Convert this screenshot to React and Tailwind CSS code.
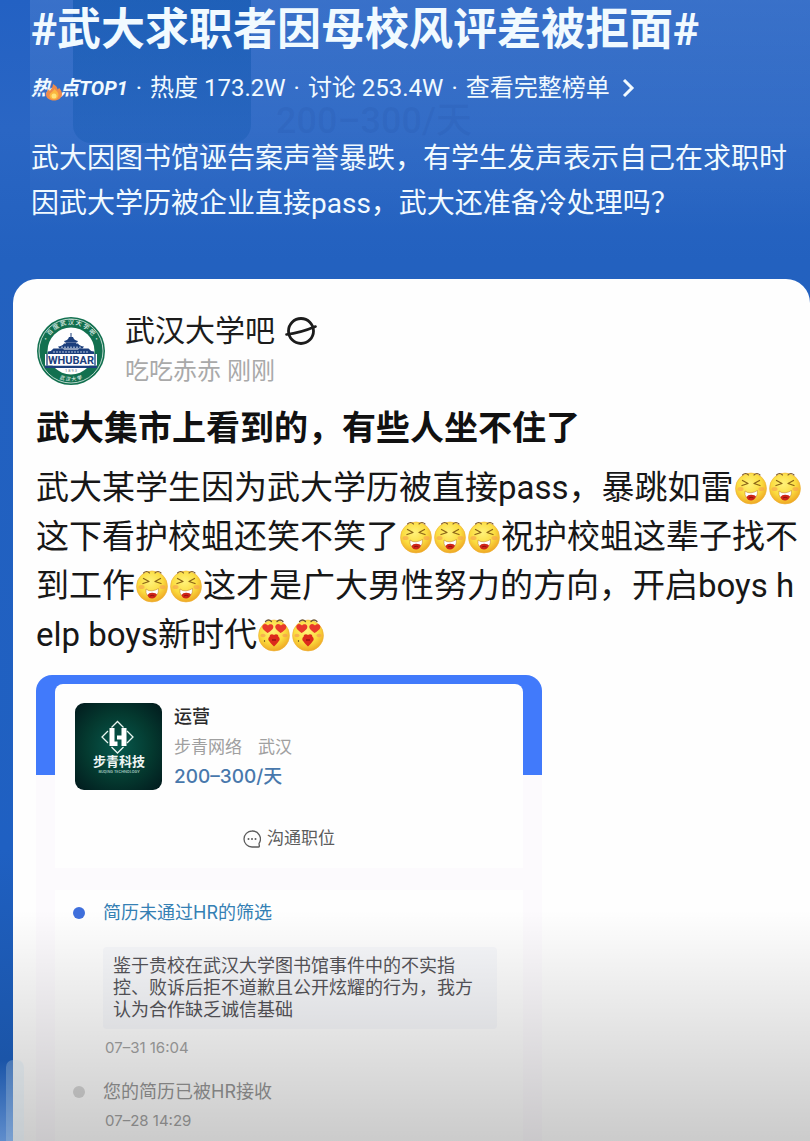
import React from 'react';

const REASON_LINES = [
    '鉴于贵校在武汉大学图书馆事件中的不实指',
    '控、败诉后拒不道歉且公开炫耀的行为，我方',
    '认为合作缺乏诚信基础'
];

const SharedDefs = () => (
    <svg className="absolute h-0 w-0" aria-hidden="true">
        <defs>
            <radialGradient id="face" cx="0.45" cy="0.35" r="0.65">
                <stop offset="0" stopColor="#fff27a" />
                <stop offset="0.6" stopColor="#fbdc3f" />
                <stop offset="1" stopColor="#efa824" />
            </radialGradient>
            <radialGradient id="logoBg" cx="0.5" cy="0.5" r="0.7">
                <stop offset="0" stopColor="#07594d" />
                <stop offset="0.55" stopColor="#04392f" />
                <stop offset="1" stopColor="#021a1d" />
            </radialGradient>
            <path id="ringTop" d="M10.5 41A25.5 25.5 0 1 1 59.5 41" />
            <path id="ringBottom" d="M7.3 46.5A30 30 0 0 0 62.7 46.5" />
        </defs>
    </svg>
);

const LaughFace = () => (
    <svg viewBox="0 0 34 34" className="inline-block h-[34px] w-[34px] shrink-0" role="img" aria-label="大笑">
        <circle cx="17" cy="17.5" r="15.5" fill="url(#face)" stroke="#eeb13a" strokeWidth="0.6" />
        <path d="M8.5 4q3-3 6 0M20 4q3-3 6 0" fill="none" stroke="#7c5a2c" strokeWidth="1.1" strokeLinecap="round" />
        <path d="M8.5 9.5l5.500 3-6 2M25.500 9.500l-5.500 3 6 2" fill="none" stroke="#8a6416" strokeWidth="1.3" strokeLinecap="round" strokeLinejoin="round" />
        <ellipse cx="6.5" cy="18" rx="3" ry="2" fill="#f59a52" opacity="0.55" />
        <ellipse cx="27.5" cy="18" rx="3" ry="2" fill="#f59a52" opacity="0.55" />
        <path d="M11 20q2.500 2.200 6 1.800t6.500-2.300q.5 8.500-6.500 8.500t-6-8z" fill="#fff" stroke="#c88b2f" strokeWidth="0.6" />
        <path d="M12.5 26q1.500-2.500 5-2.300t4.500 1.800q-1.500 4-5 4t-4.500-3.500z" fill="#cf2418" />
        <path d="M15 27q2-1.500 4.500 0" stroke="#8e120f" strokeWidth="1" fill="none" />
    </svg>
);

const LoveFace = () => (
    <svg viewBox="0 0 34 34" className="inline-block h-[34px] w-[34px] shrink-0" role="img" aria-label="花心">
        <circle cx="17" cy="17.5" r="15.5" fill="url(#face)" stroke="#eeb13a" strokeWidth="0.6" />
        <path d="M8.5 3.5q3-3 6 0M20 3.5q3-3 6 0" fill="none" stroke="#6b5230" strokeWidth="1.3" strokeLinecap="round" />
        <path d="M10.5 15C5 11 4.500 9 6 7s4-1 5 .5c1-1.500 4-2 5 0s0 4.500-5.500 7.500z" fill="#e8382b" />
        <path d="M23.5 15C18 11 17.500 9 19 7s4-1 5 .5c1-1.500 4-2 5 0s0 4.500-5.500 7.500z" fill="#e8382b" />
        <ellipse cx="6" cy="17.5" rx="2.5" ry="1.7" fill="#f59a52" opacity="0.65" />
        <ellipse cx="28" cy="17.5" rx="2.5" ry="1.7" fill="#f59a52" opacity="0.65" />
        <path d="M17 17c2-1.500 4.500-.5 4.300 1.500 2 1.700 1.700 4 .2 5-1 1.700-2.800 3.500-4.500 5-1.700-1.500-3.500-3.300-4.500-5-1.500-1-1.800-3.300.2-5-.2-2 2.300-3 4.300-1.500z" fill="#dc2a1c" />
        <path d="M15 22h4" stroke="#93130e" strokeWidth="1.3" />
        <circle cx="7.5" cy="23" r="0.7" fill="#4b3415" />
    </svg>
);

const Flame = () => (
    <svg viewBox="0 0 18 18" className="absolute left-[14px] top-[11px] h-[18px] w-[18px]" aria-hidden="true">
        <path d="M8 1c3 1.500 4.500 3.500 4.500 5.500l1.700-1.500C16 7 17 9 17 11c0 4-3.500 6.500-8 6.500S1 15 1 11.500C1 9 2.500 7.500 4 6l.8 2C6 6 8 4 8 1z" fill="#ef8b4b" />
        <path d="M9.5 6c2 2 4 3.500 4 6s-2 4.500-4.500 4.500S4.500 15 4.500 12.500 7 9.500 9.500 6z" fill="#fbb63f" />
        <circle cx="9" cy="13" r="2.5" fill="#ffe27a" />
    </svg>
);

const BarAvatar = () => (
    <svg viewBox="0 0 70 70" className="h-[70px] w-[70px] shrink-0" role="img" aria-label="武汉大学吧">
        <circle cx="35" cy="35" r="34" fill="#12704f" />
        <circle cx="35" cy="35" r="32" fill="none" stroke="#e6f1ec" strokeWidth="0.8" />
        <circle cx="35" cy="35" r="23.5" fill="#fff" />
        <g fill="#e4f0ea" fontFamily="'Noto Sans CJK SC', sans-serif" fontWeight="500">
            <text textAnchor="middle" fontSize="6"><textPath href="#ringTop" startOffset="50%">· 百 度 武 汉 大 学 吧 ·</textPath></text>
            <text textAnchor="middle" fontSize="5"><textPath href="#ringBottom" startOffset="50%">武 汉 大 学</textPath></text>
        </g>
        <g fill="#1c3f7d">
            <path d="M34.5 17h1v4h-1zM28 25q4-.5 5-4h4q1 3.500 5 4l-1 1.500H29z" />
            <path d="M30 26.5h10V29H30z" />
            <path d="M22 30.5q4.500-.5 6-3h14q1.500 2.500 6 3l-1.500 2h-23z" />
            <path d="M12 35.5q4-.5 5.500-3h9l1.500 1h14l1.500-1h9q1.500 2.500 5.500 3V38H12z" />
            <path d="M9 49.5h52V52H9z" />
        </g>
        <path d="M25 31.2h20M17 36h36" stroke="#dce7f4" strokeWidth="0.8" strokeDasharray="2 1" />
        <path d="M9 38h52v11.500H9z" fill="#fff" />
        <path d="M11 38v11.500M59 38v11.500" stroke="#1c3f7d" strokeWidth="1.3" />
        <text x="35" y="48" textAnchor="middle" fontFamily="Roboto, sans-serif" fontWeight="700" fontSize="11" fill="#1c3f7d">WHUBAR</text>
        <text x="35" y="56" textAnchor="middle" fontFamily="Roboto, sans-serif" fontSize="4" fill="#6a7d8d">1 8 9 3</text>
    </svg>
);

const CompanyLogo = () => (
    <svg viewBox="0 0 87 87" className="h-[87px] w-[87px] shrink-0" role="img" aria-label="步青科技">
        <rect width="87" height="87" rx="9" fill="url(#logoBg)" />
        <path d="M36.5 24.5l6-6 6 6M36.5 44l6 6 6-6M33 28l-6 6 6 6M52 28l6 6-6 6" fill="none" stroke="#eaf5f1" strokeWidth="1.3" />
        <path d="M34.5 25h5v13.500h3v4.500h-8zM46.500 25h5v18h-5v-6.500H42V32.500h4.500z" fill="#fff" />
        <text x="44" y="63" textAnchor="middle" fontFamily="'Noto Sans CJK SC', sans-serif" fontWeight="700" fontSize="13" fill="#f0f7f5">步青科技</text>
        <text x="44" y="70" textAnchor="middle" fontFamily="Roboto, sans-serif" fontWeight="500" fontSize="4" fill="#a9cbc3">BUQING TECHNOLOGY</text>
    </svg>
);

const TopicHeader = () => (
    <header className="relative pb-[53px] pl-[31px] text-[#f1faff]">
        {/* Faded copy of the job card behind the topic */}
        <div className="absolute left-[30px] top-0 h-[230px] w-full bg-linear-to-b from-white/10 to-transparent" aria-hidden="true"></div>
        <div className="absolute left-[73px] top-0 h-[143px] w-[178px] rounded-b-[18px] bg-linear-to-b from-[#0e55ad]/60 to-[#0e55ad]/30" aria-hidden="true"></div>
        <div className="absolute left-[276px] top-[104px] text-[36px] font-medium leading-[34px] text-[#17408f]/10" aria-hidden="true">200–300/天</div>

        <h1 className="relative whitespace-nowrap text-[44px] font-bold leading-[60px]">#武大求职者因母校风评差被拒面#</h1>
        <div className="relative mt-2 flex h-10 items-center gap-2 whitespace-nowrap text-2xl">
            <span className="relative flex items-center gap-2 text-[20px] font-bold italic leading-8">
                <span>热</span>
                <span>点TOP1</span>
                <Flame />
            </span>
            <span>·</span>
            <span>热度 173.2W</span>
            <span>·</span>
            <span>讨论 253.4W</span>
            <span>·</span>
            <a href="#top" className="flex items-center gap-3">
                查看完整榜单
                <svg viewBox="0 0 14 20" className="h-5 w-[14px]" aria-hidden="true">
                    <path d="M2 2l8 8-8 8" fill="none" stroke="currentColor" strokeWidth="3" />
                </svg>
            </a>
        </div>
        <p className="relative mt-7 whitespace-nowrap text-[28px] leading-[45px]">
            武大因图书馆诬告案声誉暴跌，有学生发声表示自己在求职时
            <br />
            因武大学历被企业直接pass，武大还准备冷处理吗？
        </p>
    </header>
);

const PostBody = () => (
    <div className="mt-[10px] whitespace-nowrap text-[33px] leading-[49px] text-[#171717]">
        <div className="flex items-center">武大某学生因为武大学历被直接pass，暴跳如雷<LaughFace /><LaughFace /></div>
        <div className="flex items-center">这下看护校蛆还笑不笑了<LaughFace /><LaughFace /><LaughFace />祝护校蛆这辈子找不</div>
        <div className="flex items-center">到工作<LaughFace /><LaughFace />这才是广大男性努力的方向，开启boys h</div>
        <div className="flex items-center">elp boys新时代<LoveFace /><LoveFace /></div>
    </div>
);

const JobShot = () => (
    <section className="mt-4 w-[506px] rounded-t-[16px] bg-[linear-gradient(#417afb_100px,#fcfafd_100px)] px-[19px] pt-[9px] font-[Inter,'Noto_Sans_CJK_SC',sans-serif]">
        <div className="rounded-t-[8px] bg-[#fefefe] px-5 pb-[15px] pt-[19px]">
            <div className="flex gap-3">
                <CompanyLogo />
                <div className="whitespace-nowrap">
                    <h3 className="text-[18px] font-medium leading-[28px] text-[#2b2b2b]">运营</h3>
                    <p className="flex gap-4 text-[17px] leading-8 text-[#a0a0a0]">
                        <span>步青网络</span>
                        <span>武汉</span>
                    </p>
                    <p className="text-[19px] font-medium leading-[28px] text-[#4878ac]">200–300/天</p>
                </div>
            </div>
            <button type="button" className="mx-auto mt-[34px] flex h-7 items-center gap-[6px] text-[17px] text-[#5c5c5c]">
                <svg viewBox="0 0 18 18" className="h-[18px] w-[18px]" aria-hidden="true">
                    <path d="M9 1a8 8 0 1 0 0 16h6.500q1 0 .8-1l-.3-2.500A8 8 0 0 0 9 1z" fill="none" stroke="currentColor" strokeWidth="1.3" strokeLinejoin="round" />
                    <circle cx="5.5" cy="9" r="1" fill="currentColor" />
                    <circle cx="9" cy="9" r="1" fill="currentColor" />
                    <circle cx="12.5" cy="9" r="1" fill="currentColor" />
                </svg>
                沟通职位
            </button>
        </div>

        <ol className="mt-[22px] whitespace-nowrap bg-[#fefefe] pb-[7px] pl-[18px] pr-[26px] pt-[10px]">
            <li className="flex gap-[18px]">
                <span className="mt-[7px] h-3 w-3 shrink-0 rounded-full bg-[#3f6fdc]"></span>
                <div className="flex-1">
                    <h4 className="text-[18px] leading-[26px] text-[#3580b4]">简历未通过HR的筛选</h4>
                    <p className="mt-[21px] rounded-[4px] bg-[#f7f8fb] px-[10px] py-2 text-[18px] leading-[22px] text-[#555459]">
                        {REASON_LINES.map((line) => (
                            <span key={line} className="block">{line}</span>
                        ))}
                    </p>
                    <time className="mt-[6px] block pl-[2px] text-[15px] leading-[26px] text-[#a3a3a3]">07–31 16:04</time>
                </div>
            </li>
            <li className="mt-[18px] flex gap-[18px]">
                <span className="mt-[7px] h-3 w-3 shrink-0 rounded-full bg-[#d8d8d8]"></span>
                <div className="flex-1">
                    <h4 className="text-[18px] leading-[26px] text-[#989898]">您的简历已被HR接收</h4>
                    <time className="mt-[3px] block pl-[2px] text-[15px] leading-[26px] text-[#a3a3a3]">07–28 14:29</time>
                </div>
            </li>
        </ol>
    </section>
);

const App = () => {
    return (
        <main className="relative flex min-h-screen flex-col overflow-hidden bg-[linear-gradient(#2361c3,#2a66c4_130px,#2361bf_260px,#1f60c2_850px,#1b55a8_1060px,#5f8dcc)] font-[Roboto,'Noto_Sans_CJK_SC',sans-serif]" lang="zh-CN">
            <SharedDefs />
            <TopicHeader />
            <article className="relative ml-[13px] flex-1 rounded-t-[24px] bg-[#fefefe] pl-[23px] pt-8">
                <div className="flex items-center gap-[19px] whitespace-nowrap">
                    <BarAvatar />
                    <div>
                        <h2 className="flex items-center gap-[10px] text-[30px] leading-10 text-[#1c1c1c]">
                            武汉大学吧
                            <svg viewBox="0 0 32 32" className="h-8 w-8" aria-hidden="true">
                                <circle cx="16" cy="16" r="12.5" fill="none" stroke="currentColor" strokeWidth="2.8" />
                                <path d="M1.5 19.5Q15 18 30.500 11.500" fill="none" stroke="currentColor" strokeWidth="2.6" strokeLinecap="round" />
                            </svg>
                        </h2>
                        <p className="text-2xl leading-10 text-[#a9a9a9]">吃吃赤赤 刚刚</p>
                    </div>
                </div>
                <h2 className="mt-3 whitespace-nowrap text-[34px] font-bold leading-[50px] text-[#111]">武大集市上看到的，有些人坐不住了</h2>
                <PostBody />
                <JobShot />
                <div className="pointer-events-none absolute inset-x-0 bottom-0 h-[231px] bg-linear-to-b from-transparent to-black/20"></div>
            </article>
            <div className="absolute bottom-0 left-[6px] h-[81px] w-[18px] rounded-t-[7px] bg-[#b9ccdc]/30" aria-hidden="true"></div>
        </main>
    );
};

export default App;
